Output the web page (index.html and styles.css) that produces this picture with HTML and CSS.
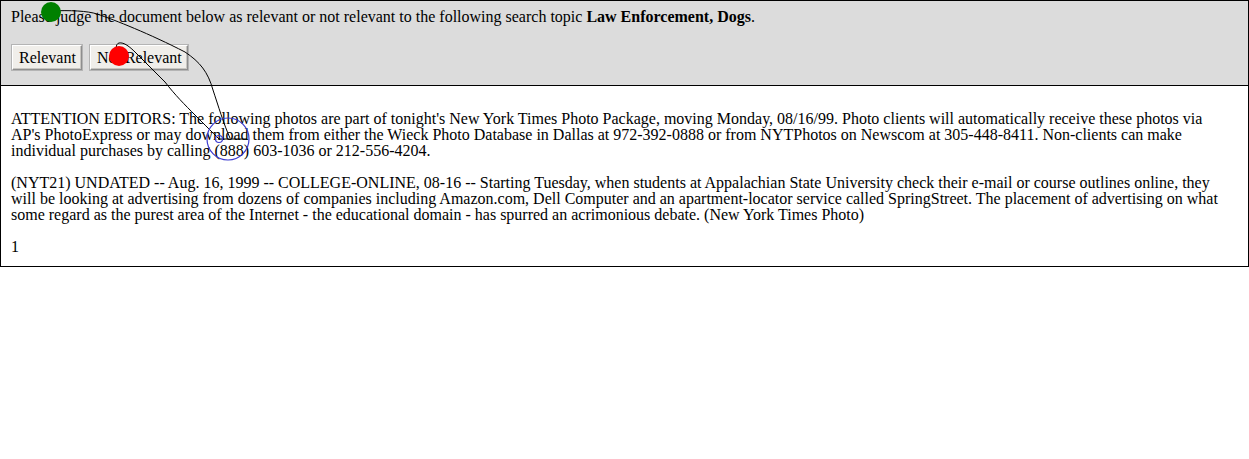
FILE: index.html
```html
<!DOCTYPE html>
<html>
<head>
<meta charset="utf-8">
<title>Relevance judgement</title>
<link rel="stylesheet" href="styles.css">
</head>
<body>
<div class="frame">
  <div class="judge">
    <div class="prompt">Please judge the document below as relevant or not relevant to the following search topic <b>Law Enforcement, Dogs</b>.</div>
    <div class="buttons">
      <button class="btn">Relevant</button>
      <button class="btn">Not Relevant</button>
    </div>
  </div>
  <div class="doc">
    <p>ATTENTION EDITORS: The following photos are part of tonight's New York Times Photo Package, moving Monday, 08/16/99. Photo clients will automatically receive these photos via AP's PhotoExpress or may download them from either the Wieck Photo Database in Dallas at 972-392-0888 or from NYTPhotos on Newscom at 305-448-8411. Non-clients can make individual purchases by calling (888) 603-1036 or 212-556-4204.</p>
    <p>(NYT21) UNDATED -- Aug. 16, 1999 -- COLLEGE-ONLINE, 08-16 -- Starting Tuesday, when students at Appalachian State University check their e-mail or course outlines online, they will be looking at advertising from dozens of companies including Amazon.com, Dell Computer and an apartment-locator service called SpringStreet. The placement of advertising on what some regard as the purest area of the Internet - the educational domain - has spurred an acrimonious debate. (New York Times Photo)</p>
    <p>1</p>
  </div>
</div>
<svg class="trace" width="1249" height="459" viewBox="0 0 1249 459">
  <path class="stroke" d="M51,11 C70,10 88,11 97,14 C115,20 150,34 185,52 C200,62 208,72 213,90 C218,105 224,125 230,138"/>
  <path class="stroke" d="M119,56 C116,50 115,44 119,43 C124,42 130,47 135,52 C145,62 155,72 165,82 C175,95 185,105 195,115 C205,125 212,132 219,139 L247,139"/>
  <circle class="ring" cx="228" cy="139" r="21"/>
  <circle class="ring" cx="219" cy="139" r="3.5"/>
  <circle class="start" cx="51" cy="12" r="10"/>
  <circle class="click" cx="119" cy="56" r="10"/>
</svg>
</body>
</html>
```
FILE: styles.css
```css
html, body {
  margin: 0;
  padding: 0;
  background: #ffffff;
}
body {
  font-family: "Liberation Serif", "Times New Roman", serif;
  font-size: 16px;
  line-height: 16px;
  color: #000;
  position: relative;
  width: 1249px;
  height: 459px;
}
.frame {
  border: 1px solid #000;
}
.judge {
  background: #dcdcdc;
  border-bottom: 1px solid #000;
  padding: 8px 10px 15px 10px;
  display: flex;
  flex-direction: column;
  gap: 20px;
}
.buttons {
  display: flex;
  gap: 8px;
  padding-left: 1px;
}
.btn {
  font-family: "Liberation Serif", "Times New Roman", serif;
  font-size: 16px;
  line-height: 16px;
  color: #000;
  background: #f0eeea;
  border: 1px solid;
  border-color: #ffffff #8e8e8e #8e8e8e #ffffff;
  box-shadow: inset -1px -1px 0 #c8c6c2, 0 0 0 1px #b4b4b4;
  padding: 4px 5px 4px 6px;
  margin: 0;
  height: 25px;
  border-radius: 0;
}
.doc {
  padding: 25px 26px 11px 10px;
  display: flex;
  flex-direction: column;
  gap: 16px;
}
.doc p {
  margin: 0;
}
.trace {
  position: absolute;
  left: 0;
  top: 0;
  pointer-events: none;
}
.stroke {
  fill: none;
  stroke: #000;
  stroke-width: 1;
}
.ring {
  fill: none;
  stroke: #3a3acf;
  stroke-width: 1.2;
}
.start {
  fill: #008000;
}
.click {
  fill: #ff0000;
}
```
